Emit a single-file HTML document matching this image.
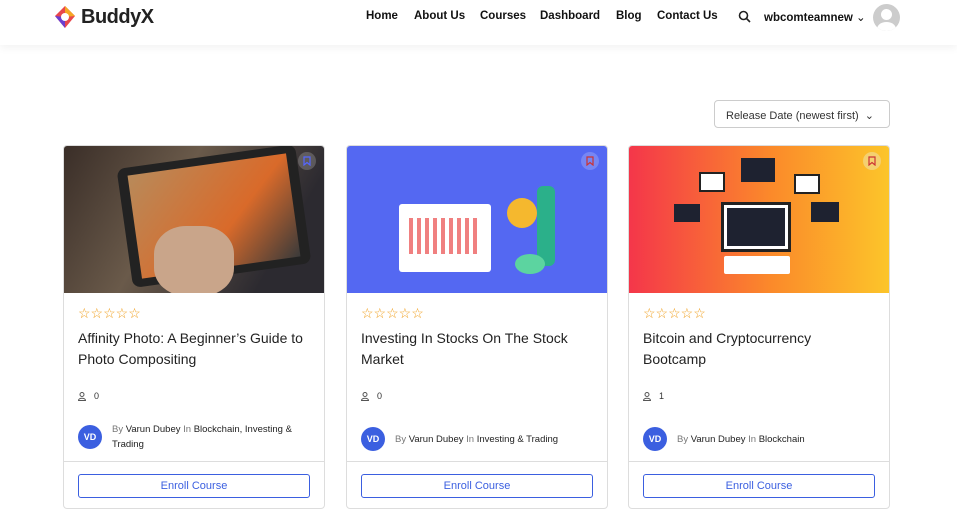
<!DOCTYPE html>
<html><head><meta charset="utf-8"><style>
*{box-sizing:border-box;margin:0;padding:0}
body{width:957px;height:512px;overflow:hidden;background:#fff;font-family:"Liberation Sans",sans-serif;color:#222;position:relative}
.hdr{position:absolute;left:0;top:0;width:957px;height:45px;background:#fff;box-shadow:0 3px 8px rgba(0,0,0,.05)}
.logo{position:absolute;left:53px;top:4px;display:flex;align-items:center}
.logo b{font-size:20px;font-weight:700;color:#222;margin-left:4px;letter-spacing:-.5px}
.nav{position:absolute;top:10px;font-size:11.5px;font-weight:700;color:#111}
.sort{position:absolute;left:714px;top:100px;width:176px;height:28px;border:1px solid #ccc;border-radius:4px;font-size:11px;color:#333;padding:8px 0 0 11px}
.card{position:absolute;top:145px;width:262px;height:364px;border:1px solid #ddd;border-radius:4px;overflow:hidden;background:#fff}
.img{height:147px;position:relative;overflow:hidden}
.stars{position:absolute;left:14px;top:159px;color:#f0a020;font-size:14px;letter-spacing:0px}
.title{position:absolute;left:14px;top:182px;width:228px;font-size:14px;line-height:21px;color:#222}
.enr{position:absolute;left:14px;top:245px;font-size:9px;color:#333;display:flex;align-items:center;gap:8px}
.auth{position:absolute;left:14px;display:flex;align-items:center;width:240px}
.av{width:24px;height:24px;border-radius:50%;background:#3b5fe0;color:#fff;font-size:9px;font-weight:700;display:flex;align-items:center;justify-content:center;flex:none}
.at{margin-left:10px;font-size:9.5px;line-height:15px;color:#222}
.at i{font-style:normal;color:#777}
.sep{position:absolute;left:0;right:0;top:315px;border-top:1px solid #ddd}
.btn{position:absolute;left:14px;top:328px;width:232px;height:24px;border:1px solid #3b5fe0;border-radius:3px;color:#3b5fe0;font-size:11px;text-align:center;line-height:22px}
.bm{position:absolute;right:8px;top:6px;width:18px;height:18px;border-radius:50%;background:rgba(255,255,255,.2);display:flex;align-items:center;justify-content:center}
</style></head><body>
<div class="hdr">
<div class="logo"><svg width="24" height="26" viewBox="0 0 24 26"><path d="M12 2 L22 12 L12 24 L2 12Z" fill="#e8474c"/><path d="M12 2 L22 12 L12 13Z" fill="#f5a623"/><path d="M2 12 L12 24 L12 13Z" fill="#6a3fd0"/><circle cx="12" cy="13" r="4" fill="#fff"/></svg><b>BuddyX</b></div>
<div class="nav" style="left:366px">Home</div>
<div class="nav" style="left:414px">About Us</div>
<div class="nav" style="left:480px">Courses</div>
<div class="nav" style="left:540px">Dashboard</div>
<div class="nav" style="left:616px">Blog</div>
<div class="nav" style="left:657px">Contact Us</div>
<svg style="position:absolute;left:738px;top:10px" width="13" height="13" viewBox="0 0 13 13"><circle cx="5.5" cy="5.5" r="4" fill="none" stroke="#222" stroke-width="1.6"/><path d="M8.5 8.5L12 12" stroke="#222" stroke-width="1.6"/></svg>
<div class="nav" style="left:764px">wbcomteamnew <span style="font-weight:400">⌄</span></div>
<div style="position:absolute;left:873px;top:4px;width:27px;height:27px;border-radius:50%;background:#ccc;overflow:hidden"><div style="position:absolute;left:8px;top:5px;width:11px;height:11px;border-radius:50%;background:#fff"></div><div style="position:absolute;left:4px;top:18px;width:19px;height:14px;border-radius:50%;background:#fff"></div></div>
</div>
<div class="sort">Release Date (newest first) &nbsp;⌄</div>

<div class="card" style="left:63px">
<div class="img" style="background:linear-gradient(120deg,#3a2e28,#6a5a4a 40%,#2c2a30 80%)"><div style="position:absolute;left:60px;top:10px;width:180px;height:120px;background:#222;border-radius:8px;transform:rotate(-8deg)"><div style="position:absolute;left:10px;top:8px;width:160px;height:104px;background:linear-gradient(135deg,#b88a5a,#d96a2a 60%,#3a3a3a)"></div></div><div style="position:absolute;left:90px;top:80px;width:80px;height:70px;background:#c9a58a;border-radius:40%"></div><div class="bm"><svg width="8" height="10" viewBox="0 0 8 10"><path d="M1 1H7V9L4 6.5 1 9Z" fill="none" stroke="#5566ff" stroke-width="1.2"/></svg></div></div>
<div class="stars">☆☆☆☆☆</div>
<div class="title">Affinity Photo: A Beginner’s Guide to Photo Compositing</div>
<div class="enr"><svg width="8" height="9" viewBox="0 0 8 9"><circle cx="4" cy="2.5" r="2" fill="none" stroke="#555"/><path d="M0.5 8.5C0.5 5.5 7.5 5.5 7.5 8.5Z" fill="none" stroke="#555"/></svg>0</div>
<div class="auth" style="top:276px"><div class="av">VD</div><div class="at"><i>By</i> Varun Dubey <i>In</i> Blockchain, Investing &amp; Trading</div></div>
<div class="sep"></div><div class="btn">Enroll Course</div>
</div>

<div class="card" style="left:346px">
<div class="img" style="background:#5468f2"><div style="position:absolute;left:52px;top:58px;width:92px;height:68px;background:#fff;border-radius:3px"><div style="position:absolute;left:10px;top:14px;width:70px;height:36px;background:repeating-linear-gradient(90deg,#f08080 0 4px,transparent 4px 8px)"></div></div><div style="position:absolute;left:160px;top:52px;width:30px;height:30px;border-radius:50%;background:#f5b82e"></div><div style="position:absolute;left:190px;top:40px;width:18px;height:80px;background:#2bb08a;border-radius:6px"></div><div style="position:absolute;left:168px;top:108px;width:30px;height:20px;background:#5cd4a0;border-radius:50%"></div><div class="bm"><svg width="8" height="10" viewBox="0 0 8 10"><path d="M1 1H7V9L4 6.5 1 9Z" fill="none" stroke="#c33" stroke-width="1.2"/></svg></div></div>
<div class="stars">☆☆☆☆☆</div>
<div class="title">Investing In Stocks On The Stock Market</div>
<div class="enr"><svg width="8" height="9" viewBox="0 0 8 9"><circle cx="4" cy="2.5" r="2" fill="none" stroke="#555"/><path d="M0.5 8.5C0.5 5.5 7.5 5.5 7.5 8.5Z" fill="none" stroke="#555"/></svg>0</div>
<div class="auth" style="top:281px"><div class="av">VD</div><div class="at"><i>By</i> Varun Dubey <i>In</i> Investing &amp; Trading</div></div>
<div class="sep"></div><div class="btn">Enroll Course</div>
</div>

<div class="card" style="left:628px">
<div class="img" style="background:linear-gradient(90deg,#f4364a,#fb8a2a 55%,#fcc52a)"><div style="position:absolute;left:92px;top:56px;width:70px;height:50px;background:#fff;border:3px solid #222"><div style="position:absolute;inset:3px;background:#1e2230"></div></div><div style="position:absolute;left:95px;top:110px;width:66px;height:18px;background:#fff;border-radius:2px"></div><div style="position:absolute;left:112px;top:12px;width:34px;height:24px;background:#1e2230"></div><div style="position:absolute;left:70px;top:26px;width:26px;height:20px;background:#fff;border:2px solid #222"></div><div style="position:absolute;left:165px;top:28px;width:26px;height:20px;background:#fff;border:2px solid #222"></div><div style="position:absolute;left:45px;top:58px;width:26px;height:18px;background:#1e2230"></div><div style="position:absolute;left:182px;top:56px;width:28px;height:20px;background:#1e2230"></div><div class="bm" style="background:#f5d070"><svg width="8" height="10" viewBox="0 0 8 10"><path d="M1 1H7V9L4 6.5 1 9Z" fill="none" stroke="#c33" stroke-width="1.2"/></svg></div></div>
<div class="stars">☆☆☆☆☆</div>
<div class="title" style="width:190px">Bitcoin and Cryptocurrency Bootcamp</div>
<div class="enr"><svg width="8" height="9" viewBox="0 0 8 9"><circle cx="4" cy="2.5" r="2" fill="none" stroke="#555"/><path d="M0.5 8.5C0.5 5.5 7.5 5.5 7.5 8.5Z" fill="none" stroke="#555"/></svg>1</div>
<div class="auth" style="top:281px"><div class="av">VD</div><div class="at"><i>By</i> Varun Dubey <i>In</i> Blockchain</div></div>
<div class="sep"></div><div class="btn">Enroll Course</div>
</div>
</body></html>
